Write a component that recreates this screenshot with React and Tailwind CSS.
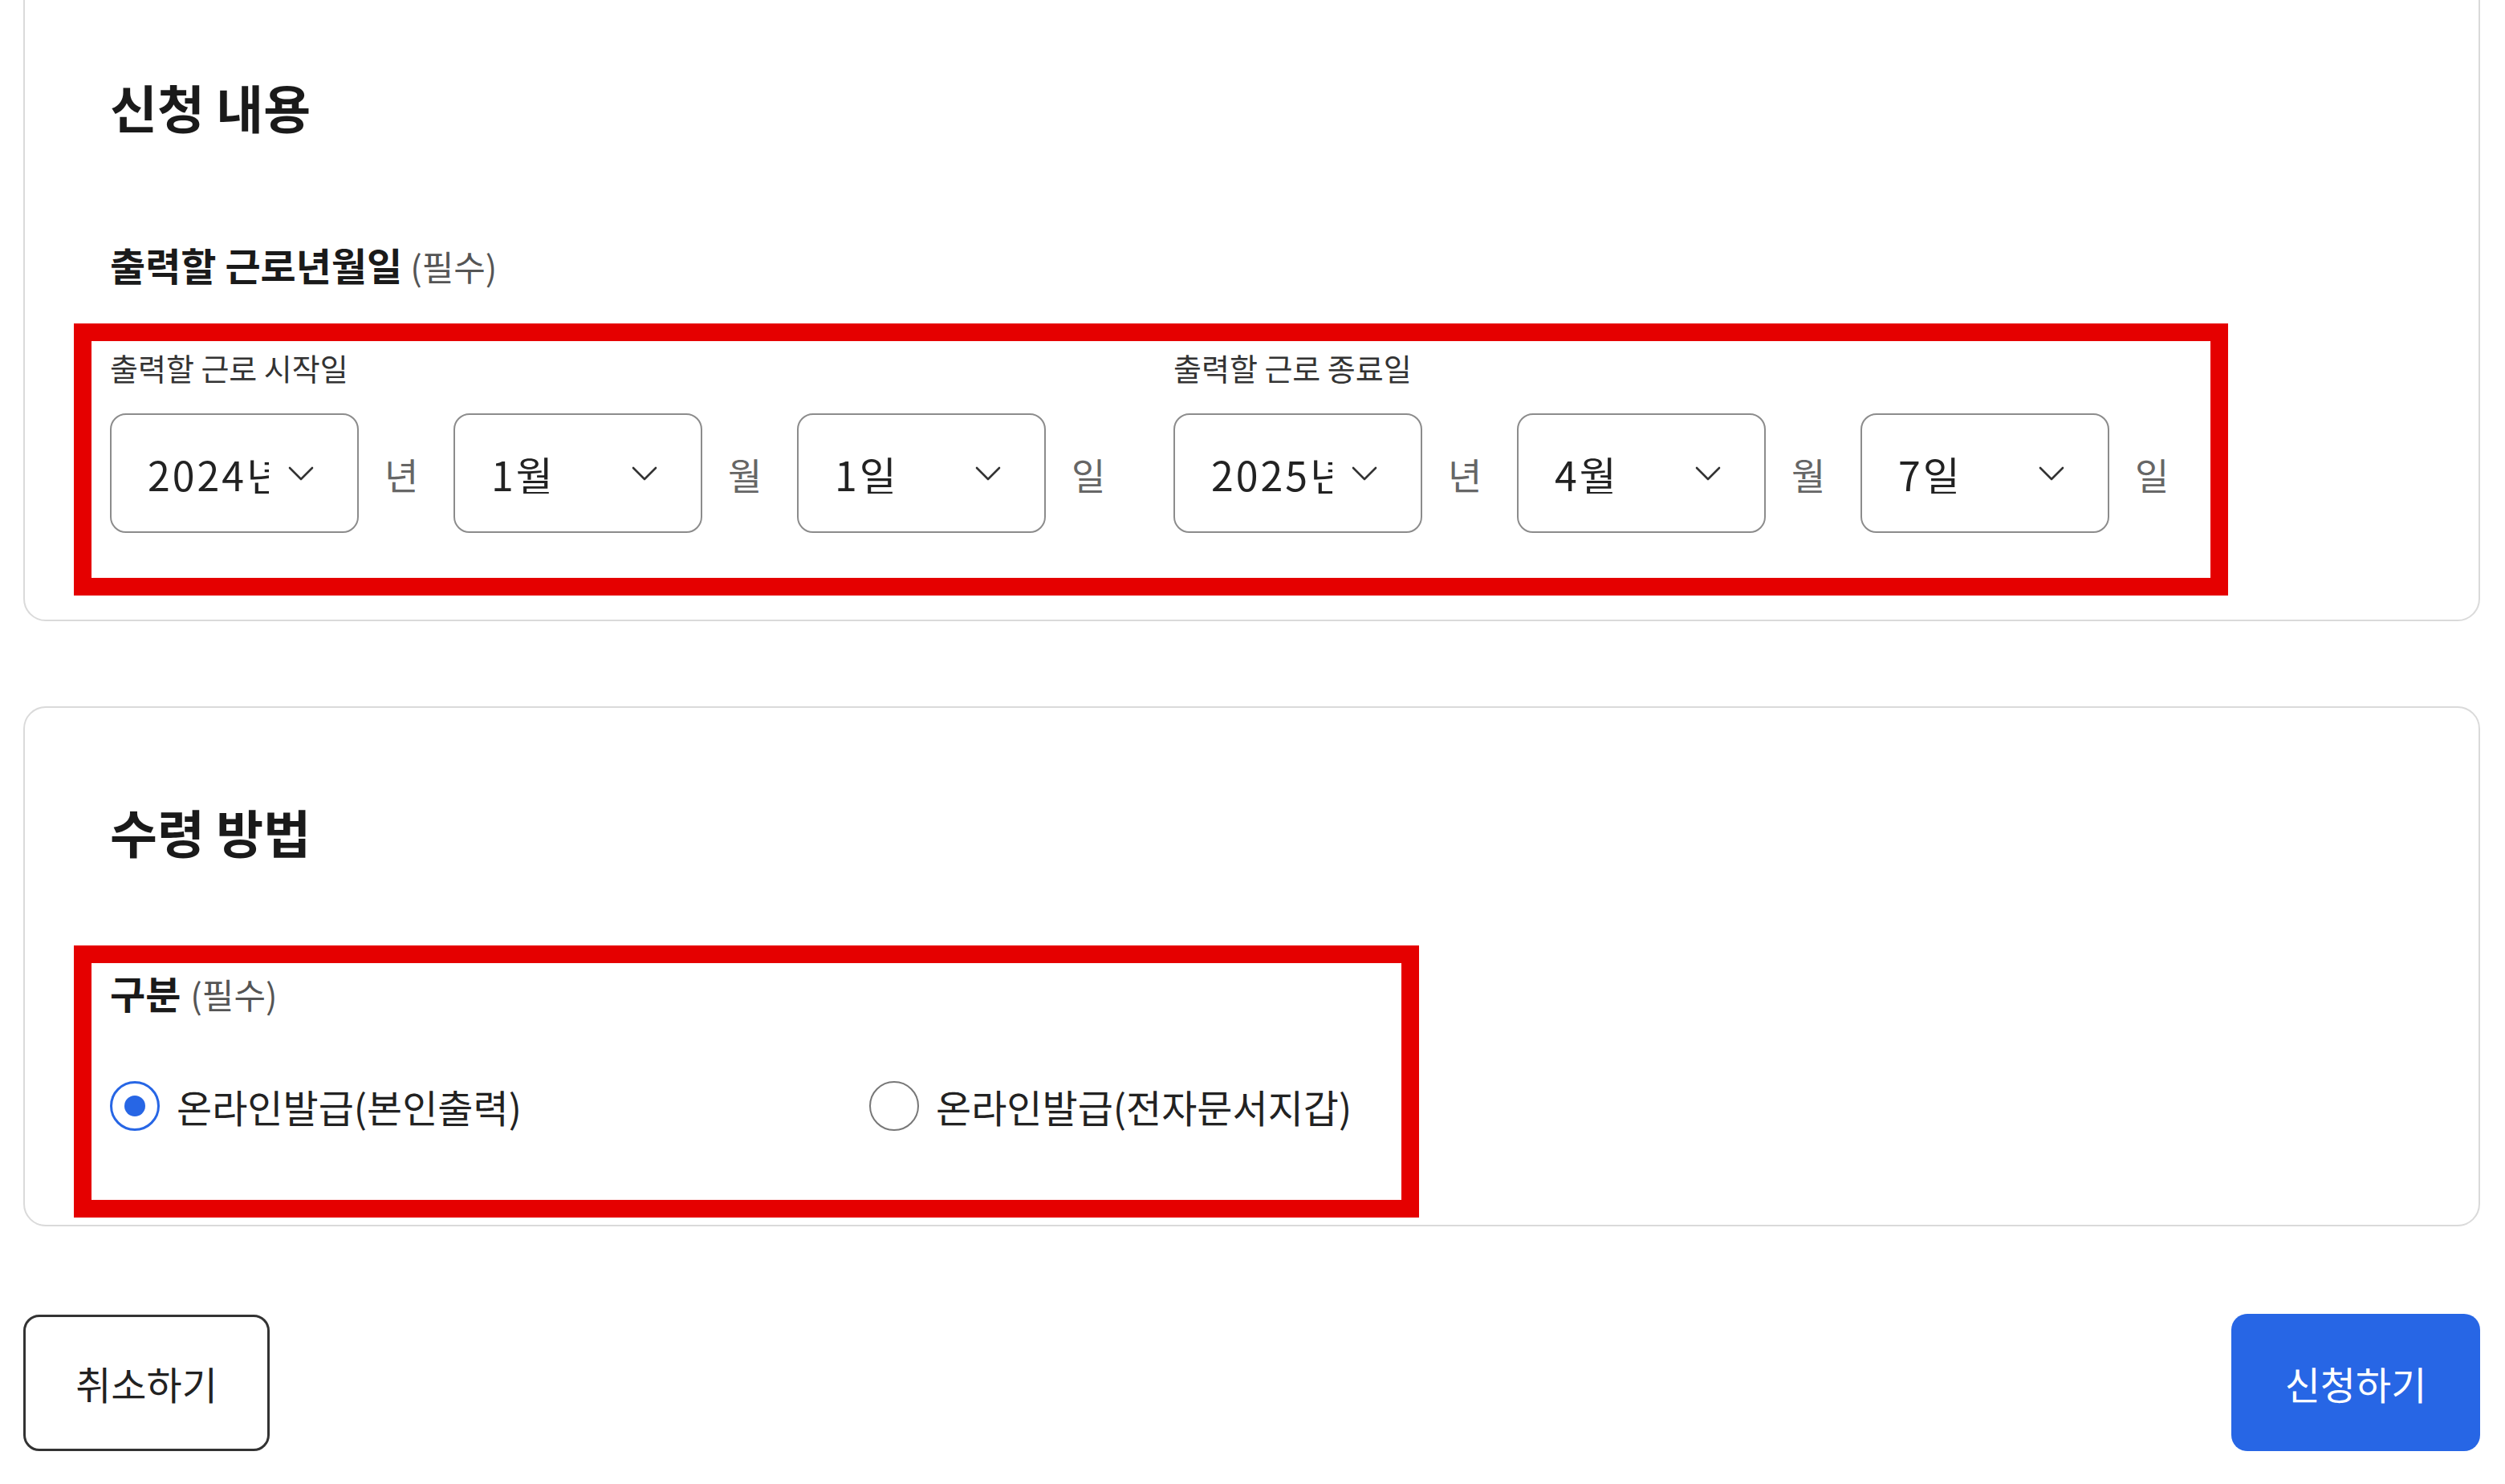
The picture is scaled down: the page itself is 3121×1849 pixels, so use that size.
import { useState } from 'react'

const FONT = "font-['Noto_Sans_CJK_KR','Noto_Sans',sans-serif]"

function Chevron() {
  return (
    <svg className="ml-[24px] h-[18px] w-[32px] shrink-0" viewBox="0 0 32 18" fill="none">
      <path d="M2 2 L16 16 L30 2" stroke="#333" strokeWidth="2.6" strokeLinecap="round" strokeLinejoin="round" />
    </svg>
  )
}

function SelectBox({ value }) {
  return (
    <div className="flex h-[149px] w-[310px] shrink-0 items-center rounded-[20px] border-2 border-[#8c8c8c] bg-white pl-[45px] pr-[54px]">
      <span className="min-w-0 flex-1 overflow-hidden whitespace-nowrap text-[50px] leading-none tracking-[0.06em] text-[#222]">{value}</span>
      <Chevron />
    </div>
  )
}

function DateGroup({ label, values, units, className = '' }) {
  return (
    <div className={`flex flex-col ${className}`}>
      <div className="text-[38px] leading-[42px] text-[#333]">{label}</div>
      <div className="mt-[36px] flex items-center">
        {values.map((v, i) => (
          <div key={i} className="flex items-center">
            <SelectBox value={v} />
            <span className="ml-[32px] w-[86px] text-[46px] leading-none text-[#666]">{units[i]}</span>
          </div>
        ))}
      </div>
    </div>
  )
}

function Radio({ checked, label, onClick, className = '' }) {
  return (
    <button type="button" onClick={onClick} className={`flex items-center text-left ${className}`}>
      {checked ? (
        <span className="flex h-[62px] w-[62px] items-center justify-center rounded-full border-[3px] border-[#2766e5] bg-white">
          <span className="h-[26px] w-[26px] rounded-full bg-[#2766e5]" />
        </span>
      ) : (
        <span className="h-[62px] w-[62px] rounded-full border-2 border-[#777] bg-white" />
      )}
      <span className="ml-[21px] text-[48px] leading-none text-[#222]">{label}</span>
    </button>
  )
}

export default function App() {
  const [method, setMethod] = useState('self')
  const units = ['년', '월', '일']

  return (
    <div className={`min-h-screen bg-white pl-[29px] pr-[31px] ${FONT}`}>
      {/* 신청 내용 */}
      <section className="-mt-[27px] rounded-[28px] border-2 border-[#dadada] bg-white pb-[30px] pl-[106px] pt-[122px]">
        <h2 className="text-[64px] font-bold leading-[70px] text-[#1a1a1a]">신청 내용</h2>
        <div className="mt-[136px] flex items-baseline leading-[53px]">
          <span className="text-[48px] font-bold text-[#1a1a1a]">출력할 근로년월일</span>
          <span className="ml-[10px] text-[43px] text-[#555]">(필수)</span>
        </div>
        <div className="-ml-[45px] mt-[45px] flex w-[2684px] border-[22px] border-[#e50000] pb-[56px] pl-[23px] pt-[12px]">
          <DateGroup label="출력할 근로 시작일" values={['2024년', '1월', '1일']} units={units} />
          <DateGroup label="출력할 근로 종료일" values={['2025년', '4월', '7일']} units={units} className="ml-[41px]" />
        </div>
      </section>

      {/* 수령 방법 */}
      <section className="mt-[106px] rounded-[28px] border-2 border-[#dadada] bg-white pb-[9px] pl-[106px] pt-[118px]">
        <h2 className="text-[64px] font-bold leading-[70px] text-[#1a1a1a]">수령 방법</h2>
        <div className="-ml-[45px] mt-[108px] w-[1676px] border-[22px] border-[#e50000] pb-[86px] pl-[23px] pt-[10px]">
          <div className="flex items-baseline leading-[53px]">
            <span className="text-[48px] font-bold text-[#1a1a1a]">구분</span>
            <span className="ml-[12px] text-[43px] text-[#555]">(필수)</span>
          </div>
          <div className="mt-[82px] flex items-center">
            <Radio checked={method === 'self'} label="온라인발급(본인출력)" onClick={() => setMethod('self')} className="w-[946px]" />
            <Radio checked={method === 'wallet'} label="온라인발급(전자문서지갑)" onClick={() => setMethod('wallet')} />
          </div>
        </div>
      </section>

      <div className="mt-[109px] flex items-center justify-between">
        <button type="button" className="flex h-[170px] w-[307px] items-center justify-center rounded-[20px] border-[3px] border-[#333] bg-white text-[48px] text-[#222]">
          취소하기
        </button>
        <button type="button" className="flex h-[171px] w-[310px] items-center justify-center rounded-[20px] bg-[#2766e5] text-[48px] text-white">
          신청하기
        </button>
      </div>
    </div>
  )
}
